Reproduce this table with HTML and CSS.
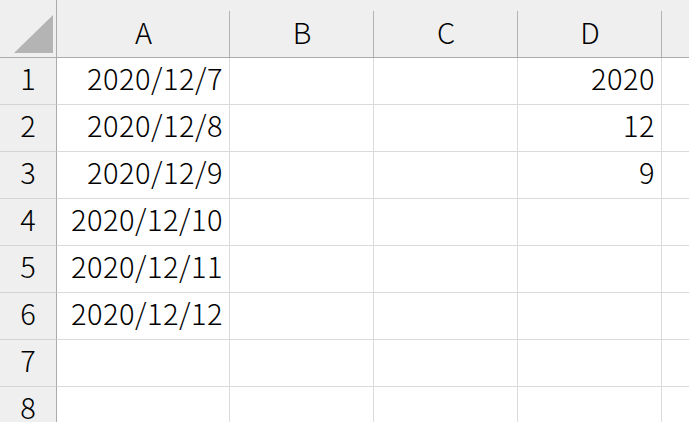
FILE: index.html
```html
<!DOCTYPE html>
<html lang="ja">
<head>
<meta charset="utf-8">
<link rel="stylesheet" href="styles.css">
</head>
<body>
<div class="sheet">
  <div class="corner"><div class="tri"></div></div>
  <div class="colhead">A</div>
  <div class="colhead">B</div>
  <div class="colhead">C</div>
  <div class="colhead">D</div>
  <div class="colhead last"></div>

  <div class="rowhead">1</div>
  <div class="cell">2020/12/7</div><div class="cell"></div><div class="cell"></div><div class="cell">2020</div><div class="cell last"></div>
  <div class="rowhead">2</div>
  <div class="cell">2020/12/8</div><div class="cell"></div><div class="cell"></div><div class="cell">12</div><div class="cell last"></div>
  <div class="rowhead">3</div>
  <div class="cell">2020/12/9</div><div class="cell"></div><div class="cell"></div><div class="cell">9</div><div class="cell last"></div>
  <div class="rowhead">4</div>
  <div class="cell">2020/12/10</div><div class="cell"></div><div class="cell"></div><div class="cell"></div><div class="cell last"></div>
  <div class="rowhead">5</div>
  <div class="cell">2020/12/11</div><div class="cell"></div><div class="cell"></div><div class="cell"></div><div class="cell last"></div>
  <div class="rowhead">6</div>
  <div class="cell">2020/12/12</div><div class="cell"></div><div class="cell"></div><div class="cell"></div><div class="cell last"></div>
  <div class="rowhead">7</div>
  <div class="cell"></div><div class="cell"></div><div class="cell"></div><div class="cell"></div><div class="cell last"></div>
  <div class="rowhead">8</div>
  <div class="cell"></div><div class="cell"></div><div class="cell"></div><div class="cell"></div><div class="cell last"></div>
</div>
</body>
</html>
```
FILE: styles.css
```css
html, body {
  margin: 0;
  padding: 0;
  background: #ffffff;
  overflow: hidden;
}
.sheet {
  display: grid;
  grid-template-columns: 57px 173px 144px 144px 144px 40px;
  grid-template-rows: 58px repeat(8, 47px);
  font-family: "Noto Sans CJK JP", "Noto Sans", sans-serif;
  font-weight: 300;
  font-size: 29px;
  color: #000000;
  width: 702px;
}
.corner {
  background: #efefef;
  border-right: 1px solid #ababab;
  border-bottom: 1px solid #ababab;
  box-sizing: border-box;
  padding: 15px 3px 4px 14px;
}
.tri {
  width: 39px;
  height: 38px;
  background: #b4b4b4;
  clip-path: polygon(100% 0, 100% 100%, 0 100%);
}
.colhead {
  background: #efefef;
  border-bottom: 1px solid #ababab;
  box-sizing: border-box;
  display: flex;
  align-items: center;
  justify-content: center;
  padding-top: 4px;
  position: relative;
}
.colhead::after {
  content: "";
  position: absolute;
  right: 0;
  top: 11px;
  bottom: 0;
  width: 1px;
  background: #b4b4b4;
}
.rowhead {
  background: #efefef;
  border-right: 1px solid #ababab;
  border-bottom: 1px solid #d4d4d4;
  box-sizing: border-box;
  display: flex;
  align-items: center;
  justify-content: center;
  padding-bottom: 8px;
}
.cell {
  border-right: 1px solid #dadada;
  border-bottom: 1px solid #dadada;
  box-sizing: border-box;
  display: flex;
  align-items: center;
  justify-content: flex-end;
  padding-right: 6px;
  padding-bottom: 8px;
  white-space: nowrap;
  letter-spacing: 0.5px;
}
```
